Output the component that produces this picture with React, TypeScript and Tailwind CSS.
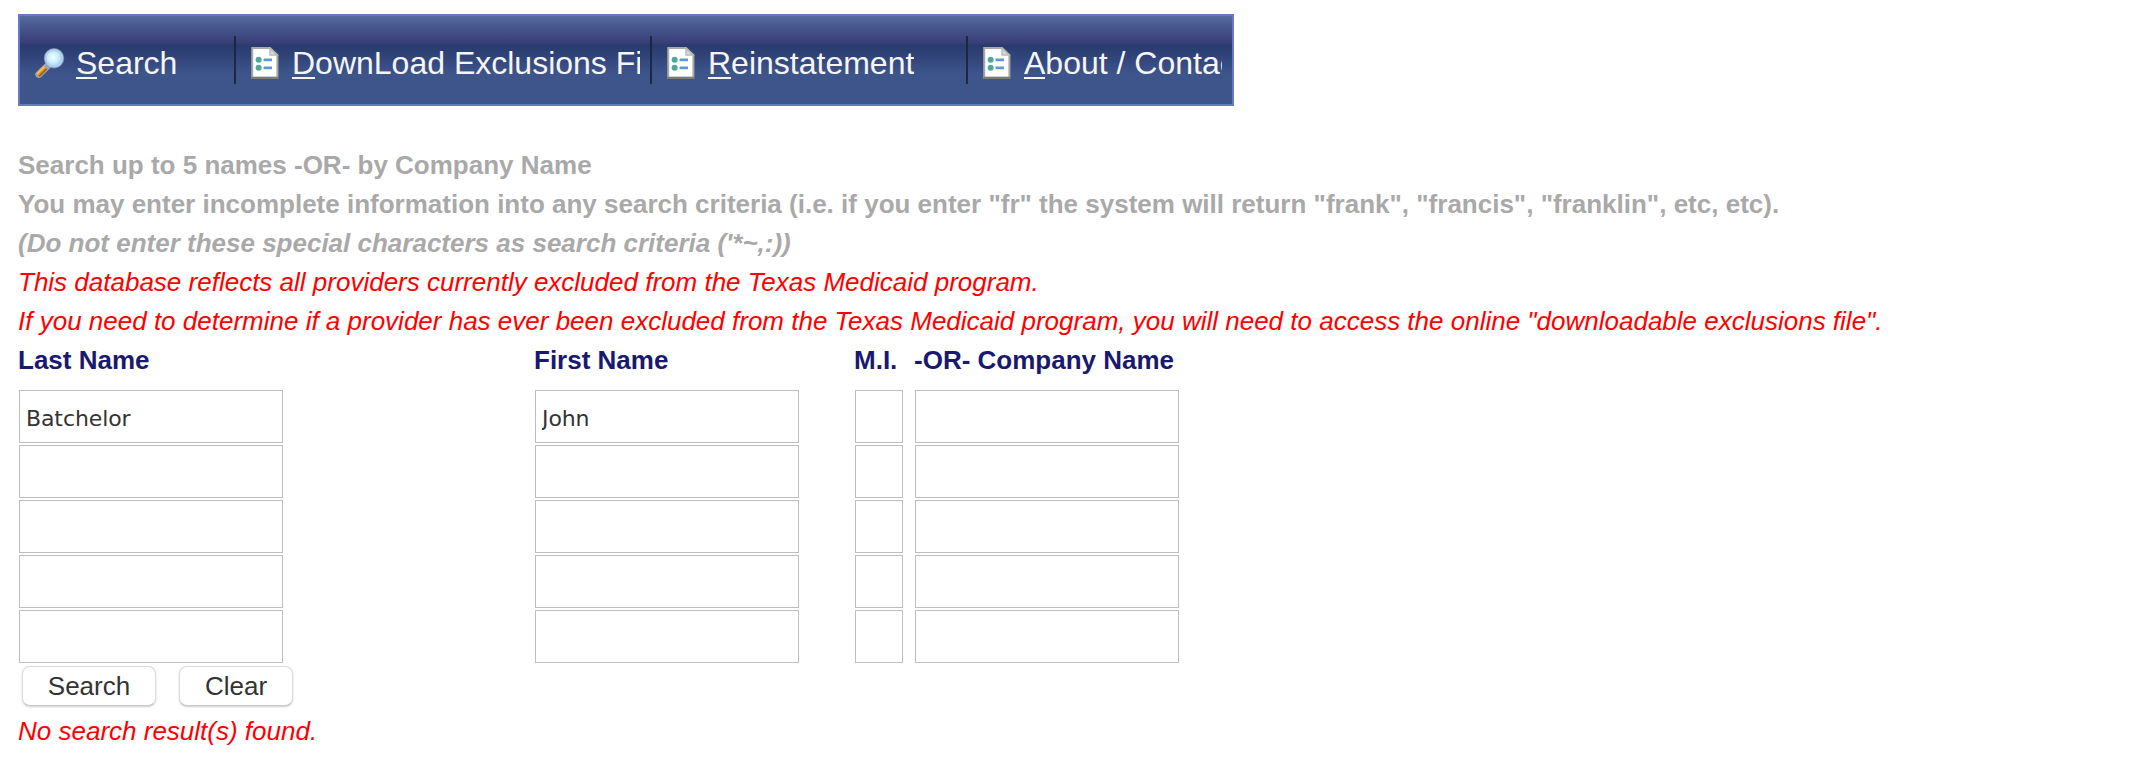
import type { ReactNode } from "react";

function MagnifierIcon() {
  return (
    <svg viewBox="0 0 32 32" className="mt-1.5 h-8 w-8 shrink-0">
      <defs>
        <radialGradient id="lens" cx="45%" cy="45%" r="60%">
          <stop offset="0" stopColor="#f4fdff" />
          <stop offset="0.55" stopColor="#c6edfc" />
          <stop offset="1" stopColor="#84c8f0" />
        </radialGradient>
      </defs>
      <path d="M15.5 17 L4.8 27.4" stroke="#9aa3b4" strokeWidth="7" strokeLinecap="round" />
      <path d="M11.5 20.5 L3.6 28.2" stroke="#e08f1c" strokeWidth="5" />
      <path d="M10.5 19.6 L2.9 27" stroke="#f7c46a" strokeWidth="1.6" />
      <path d="M12.6 22 L5.2 29.2" stroke="#94581c" strokeWidth="1.4" />
      <circle cx="20" cy="11.3" r="8.6" fill="url(#lens)" stroke="#b4cdea" strokeWidth="2.4" />
      <circle cx="20" cy="11.3" r="9.8" fill="none" stroke="#7d93bb" strokeWidth="0.6" />
    </svg>
  );
}

function DocumentIcon() {
  return (
    <svg viewBox="0 0 28 32" className="mt-1.5 h-8 w-7 shrink-0">
      <path d="M1.2 1 H19 L26.4 8 V30.8 H1.2 Z" fill="#fff" stroke="#a9a8a3" strokeWidth="2" />
      <path d="M0.6 30.8 H27" stroke="#7b796f" strokeWidth="2" />
      <path d="M19 1.2 V8 H26 Z" fill="#d9d9d7" stroke="#b9b9b6" strokeWidth="1.4" />
      <circle cx="7.6" cy="12.8" r="3" fill="#4fa89d" />
      <circle cx="7.6" cy="20.8" r="3" fill="#4fa89d" />
      <path d="M12.6 12.8 H21 M12.6 20.8 H21" stroke="#6096d2" strokeWidth="2.8" />
    </svg>
  );
}

type NavItemProps = { icon: ReactNode; hotkey: string; rest: string; box: string; label: string };

function NavItem({ icon, hotkey, rest, box, label }: NavItemProps) {
  return (
    <a className={`flex h-12 items-center ${box}`}>
      {icon}
      <span className={`h-12 overflow-hidden whitespace-nowrap text-[32px] leading-[54px] text-[#f5f5f5] ${label}`}>
        <span className="inline-block h-[43px] border-b-2 border-[#f5f5f5] align-top">{hotkey}</span>
        {rest}
      </span>
    </a>
  );
}

function Column({ title, width, value = "" }: { title: string; width: string; value?: string }) {
  return (
    <div>
      <div className="mb-[10px] h-[39px] whitespace-nowrap font-bold leading-[39px] text-[#191970]">{title}</div>
      <div className="ml-px flex flex-col gap-[2px]">
        {[value, "", "", "", ""].map((text, i) => (
          <input
            key={i}
            defaultValue={text}
            className={`h-[53px] border border-[#bebebe] bg-white px-[6px] pt-1 font-['DejaVu_Sans',sans-serif] text-[22px] tracking-[-0.1px] text-[#333] outline-none ${width}`}
          />
        ))}
      </div>
    </div>
  );
}

function Button({ children, width }: { children: ReactNode; width: string }) {
  return (
    <button
      className={`h-10 rounded-[8px] border border-[#dcdcdc] border-b-[#c8c8c8] bg-white leading-[38px] text-[#333] shadow-[0_1px_2px_rgba(0,0,0,0.2)] ${width}`}
    >
      {children}
    </button>
  );
}

export default function App() {
  return (
    <div className="h-[758px] w-[2150px] overflow-hidden bg-white pl-[18px] pt-[14px] font-['Liberation_Sans',Arial,sans-serif] text-[26px] leading-[39px]">
      <nav className="flex h-[92px] w-[1216px] border-2 border-[#667ac2] bg-[linear-gradient(to_bottom,#566ba0_0px,#47558c_12px,#3a3f78_26px,#353c72_28px,#293b6d_29px,#2c4074_36px,#35497f_46px,#3d558b_58px,#3d558b_100%)] pt-5">
        <NavItem icon={<MagnifierIcon />} hotkey="S" rest="earch" box="w-[216px] border-r-2 border-[#1c2746] pl-[14px]" label="ml-[10px]" />
        <NavItem icon={<DocumentIcon />} hotkey="D" rest="ownLoad Exclusions File" box="w-[416px] border-r-2 border-[#1c2746] pl-[15px]" label="ml-[13px] w-[348px]" />
        <NavItem icon={<DocumentIcon />} hotkey="R" rest="einstatement" box="w-[316px] border-r-2 border-[#1c2746] pl-[15px]" label="ml-[13px]" />
        <NavItem icon={<DocumentIcon />} hotkey="A" rest="bout / Contact" box="w-[264px] pl-[15px]" label="ml-[13px] w-[198px]" />
      </nav>

      <div className="mt-10 whitespace-nowrap">
        <div className="font-bold text-[#a9a9a9]">
          <p>Search up to 5 names -OR- by Company Name</p>
          <p>
            You may enter incomplete information into any search criteria (i.e. if you enter "fr" the system will
            return "frank", "francis", "franklin", etc, etc).
          </p>
          <p className="italic">(Do not enter these special characters as search criteria ('*~,:))</p>
        </div>
        <div className="italic text-[#ff0000]">
          <p>This database reflects all providers currently excluded from the Texas Medicaid program.</p>
          <p>
            If you need to determine if a provider has ever been excluded from the Texas Medicaid program, you will
            need to access the online "downloadable exclusions file".
          </p>
        </div>
      </div>

      <div className="grid grid-cols-[516px_320px_60px_266px]">
        <Column title="Last Name" width="w-[264px]" value="Batchelor" />
        <Column title="First Name" width="w-[264px]" value="John" />
        <Column title="M.I." width="w-[48px]" />
        <Column title="-OR- Company Name" width="w-[264px]" />
      </div>

      <div className="ml-1 mt-[3px] flex gap-[23px]">
        <Button width="w-[134px]">Search</Button>
        <Button width="w-[114px]">Clear</Button>
      </div>
      <p className="mt-[6px] italic text-[#ff0000]">No search result(s) found.</p>
    </div>
  );
}
